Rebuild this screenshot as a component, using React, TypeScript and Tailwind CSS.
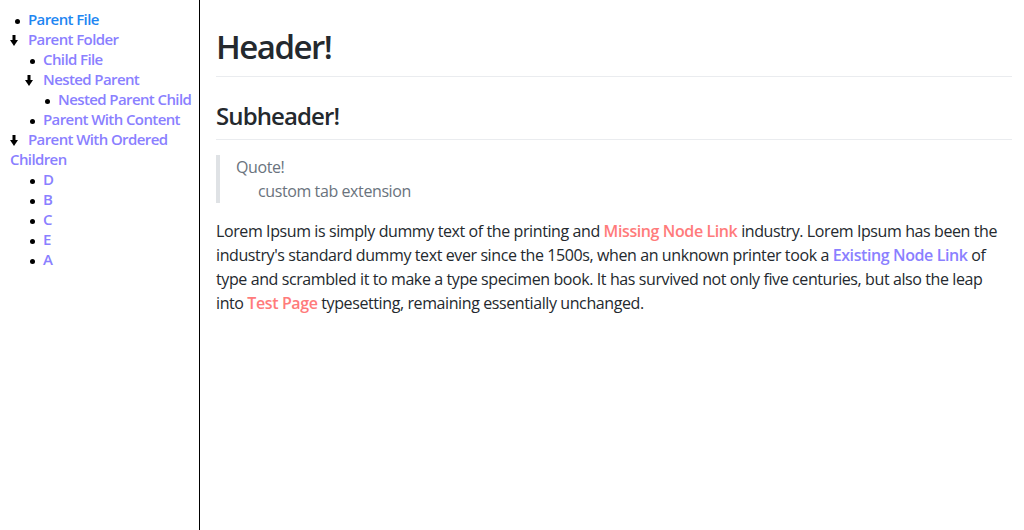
import React from "react";

type Row =
  | {kind: "file"; label: string; depth: number; active?: boolean}
  | {kind: "folder"; label: string; depth: number};

const rows: Row[] = [
  {kind: "file", label: "Parent File", depth: 0, active: true},
  {kind: "folder", label: "Parent Folder", depth: 0},
  {kind: "file", label: "Child File", depth: 1},
  {kind: "folder", label: "Nested Parent", depth: 1},
  {kind: "file", label: "Nested Parent Child", depth: 2},
  {kind: "file", label: "Parent With Content", depth: 1},
  {kind: "folder", label: "Parent With Ordered Children", depth: 0},
  {kind: "file", label: "D", depth: 1},
  {kind: "file", label: "B", depth: 1},
  {kind: "file", label: "C", depth: 1},
  {kind: "file", label: "E", depth: 1},
  {kind: "file", label: "A", depth: 1},
];

const filePad = ["pl-[7px]", "pl-[22px]", "pl-[37px]"];
const folderPad = ["pl-[2px]", "pl-[17px]", "pl-[32px]"];

function Arrow() {
  return (
    <svg width="8" height="11" viewBox="0 0 8 11" className="inline-block align-[-1px]">
      <rect x="2.5" y="0" width="3" height="6" fill="#000" />
      <polygon points="0,5 8,5 4,11" fill="#000" />
    </svg>
  );
}

function TreeRow({row}: {row: Row}) {
  const color =
    row.kind === "file" && row.active ? "text-[#1e86f2]" : "text-[#8a80ff]";
  if (row.kind === "folder") {
    return (
      <div className={`${folderPad[row.depth]} leading-[20px]`}>
        <span className="mr-[10px]">
          <Arrow />
        </span>
        <span className={color}>{row.label}</span>
      </div>
    );
  }
  return (
    <div className={`${filePad[row.depth]} leading-[20px]`}>
      <span className="inline-block w-[5px] h-[5px] rounded-full bg-black mr-[8px] align-[1px]" />
      <span className={color}>{row.label}</span>
    </div>
  );
}

function Sidebar() {
  return (
    <div className="w-[200px] shrink-0 border-r border-black pl-[8px] pt-[9px] text-[15px] font-semibold tracking-[-0.6px]">
      {rows.map((row) => (
        <TreeRow key={row.label} row={row} />
      ))}
    </div>
  );
}

function Content() {
  return (
    <div className="flex-1 pl-[16px] pr-[12px] pt-[22px] text-[#24292e] tracking-[-0.4px]">
      <h1 className="text-[33px] font-semibold leading-[50px] pb-[4px] border-b border-[#eaecef] tracking-[-1.5px]">
        Header!
      </h1>
      <h2 className="mt-[21px] text-[24px] font-semibold leading-[36px] pb-[5px] border-b border-[#eaecef] tracking-[-0.9px]">
        Subheader!
      </h2>
      <blockquote className="mt-[15px] border-l-4 border-[#dfe2e5] pl-[16px] text-[#6a737d] text-[16px] leading-[24px]">
        <div>Quote!</div>
        <div className="pl-[22px]">custom tab extension</div>
      </blockquote>
      <p className="mt-[16px] text-[16px] leading-[24px]">
        Lorem Ipsum is simply dummy text of the printing and{" "}
        <span className="font-semibold text-[#ff7b7b]">Missing Node Link</span>{" "}
        industry. Lorem Ipsum has been the industry's standard dummy text ever
        since the 1500s, when an unknown printer took a{" "}
        <span className="font-semibold text-[#8a80ff]">Existing Node Link</span>{" "}
        of type and scrambled it to make a type specimen book. It has survived
        not only five centuries, but also the leap into{" "}
        <span className="font-semibold text-[#ff7b7b]">Test Page</span>{" "}
        typesetting, remaining essentially unchanged.
      </p>
    </div>
  );
}

export default function App() {
  return (
    <div className="flex w-[1024px] h-[530px] bg-white font-['Open_Sans',sans-serif]">
      <Sidebar />
      <Content />
    </div>
  );
}
